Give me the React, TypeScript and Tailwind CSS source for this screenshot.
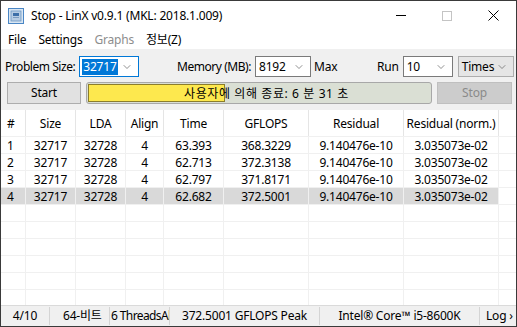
import { ChevronDown } from "lucide-react";

const font = { fontFamily: '"Noto Sans", "Noto Sans CJK KR", sans-serif' };

const columns = [
  { label: "#", cls: "w-[25px] justify-start pl-[6px]" },
  { label: "Size", cls: "w-[50px] justify-center" },
  { label: "LDA", cls: "w-[50px] justify-center" },
  { label: "Align", cls: "w-[38px] justify-center" },
  { label: "Time", cls: "w-[60px] justify-center" },
  { label: "GFLOPS", cls: "w-[85px] justify-center" },
  { label: "Residual", cls: "w-[95px] justify-center" },
  { label: "Residual (norm.)", cls: "w-[95px] justify-center" },
];

const rows = [
  ["1", "32717", "32728", "4", "63.393", "368.3229", "9.140476e-10", "3.035073e-02"],
  ["2", "32717", "32728", "4", "62.713", "372.3138", "9.140476e-10", "3.035073e-02"],
  ["3", "32717", "32728", "4", "62.797", "371.8171", "9.140476e-10", "3.035073e-02"],
  ["4", "32717", "32728", "4", "62.682", "372.5001", "9.140476e-10", "3.035073e-02"],
];

function Combo(props: { value: string; width: string; focused?: boolean; gray?: boolean }) {
  return (
    <div
      className={`flex h-[21px] shrink-0 items-center justify-between border pl-[2px] pr-[5px] ${props.width} ${
        props.focused ? "border-[#0078d7] bg-white" : props.gray ? "border-[#adadad] bg-[#e5e5e5]" : "border-[#7a7a7a] bg-white"
      }`}
    >
      <span className={props.focused ? "bg-[#0078d7] px-[1px] leading-[16px] text-white" : "px-[1px] leading-[16px]"}>
        {props.value}
      </span>
      <ChevronDown className="h-[12px] w-[12px] text-[#555]" strokeWidth={1.3} />
    </div>
  );
}

function AppIcon() {
  return (
    <svg width="16" height="16" viewBox="0 0 16 16">
      <rect x="0.5" y="0.5" width="15" height="15" fill="#d9e6f2" stroke="#4a86c5" />
      <rect x="3" y="3" width="10" height="10" fill="#b8cde3" stroke="#6b96c3" strokeWidth="0.8" />
      <rect x="5" y="5" width="6" height="3" fill="#3d6fa8" />
      <rect x="5" y="9" width="6" height="1" fill="#7c9cc0" />
    </svg>
  );
}

export default function App() {
  return (
    <div
      className="flex h-[327px] w-[517px] flex-col overflow-hidden border border-[#3a3a3a] bg-[#f0f0f0] text-[12px] tracking-[-0.2px] whitespace-nowrap text-black"
      style={font}
    >
      {/* title bar */}
      <div className="flex h-[29px] shrink-0 items-center bg-white">
        <div className="ml-[7px] mr-[7px] flex items-center">
          <AppIcon />
        </div>
        <span>Stop - LinX v0.9.1 (MKL: 2018.1.009)</span>
        <div className="ml-auto flex h-full items-center">
          <div className="flex h-full w-[46px] items-center justify-center">
            <div className="h-[1px] w-[10px] bg-black" />
          </div>
          <div className="flex h-full w-[46px] items-center justify-center">
            <div className="h-[10px] w-[10px] border border-[#c4c4c4]" />
          </div>
          <div className="flex h-full w-[46px] items-center justify-center">
            <svg width="11" height="11" viewBox="0 0 11 11">
              <path d="M0.5 0.5 L10.5 10.5 M10.5 0.5 L0.5 10.5" stroke="#000" strokeWidth="1" />
            </svg>
          </div>
        </div>
      </div>

      {/* menu */}
      <div className="flex h-[19px] shrink-0 items-center gap-[12px] bg-white pl-[7px]">
        <span>File</span>
        <span>Settings</span>
        <span className="text-[#8d8d8d]">Graphs</span>
        <span>정보(Z)</span>
      </div>

      {/* controls row 1 */}
      <div className="mt-[7px] flex h-[21px] shrink-0 items-center">
        <div className="ml-[4px] flex w-[172px] shrink-0 items-center gap-[4px]">
          <span className="tracking-[-0.45px]">Problem Size:</span>
          <Combo value="32717" width="w-[60px]" focused />
        </div>
        <div className="flex w-[200px] shrink-0 items-center gap-[3px]">
          <span className="mr-[1px] tracking-[-0.45px]">Memory (MB):</span>
          <Combo value="8192" width="w-[56px]" />
          <span>Max</span>
        </div>
        <div className="flex items-center gap-[4px]">
          <span>Run</span>
          <Combo value="10" width="w-[50px]" />
        </div>
        <div className="ml-[5px]">
          <Combo value="Times" width="w-[56px]" gray />
        </div>
      </div>

      {/* controls row 2 */}
      <div className="mt-[5px] flex h-[22px] shrink-0 items-stretch">
        <div className="ml-[6px] flex w-[74px] items-center justify-center border border-[#adadad] bg-[#e1e1e1]">Start</div>
        <div className="relative ml-[5px] flex w-[346px] items-center rounded-[3px] border border-[#a8a8a8] bg-[#dadfd4]">
          <div className="ml-[1px] h-[18px] w-[137px] border border-[#8b7d2c] bg-[#fde84e]" />
          <span className="absolute left-[97px] top-[2px] tracking-[0.6px]">사용자에 의해 종료: 6 분 31 초</span>
        </div>
        <div className="ml-[5px] flex w-[75px] items-center justify-center border border-[#bfbfbf] bg-[#cccccc] text-[#8a8a8a]">
          Stop
        </div>
      </div>

      {/* table */}
      <div className="mt-[6px] flex h-[195px] shrink-0 flex-col overflow-hidden bg-white">
        <div className="flex h-[26px] shrink-0">
          {columns.map((c, i) => (
            <div key={i} className={`flex items-center border-r border-[#e5e5e5] pt-[2px] ${c.cls}`}>
              {c.label}
            </div>
          ))}
          <div className="flex-1" />
        </div>
        {rows.map((r, ri) => (
          <div key={ri} className="flex h-[17px] shrink-0">
            {r.map((v, ci) => (
              <div
                key={ci}
                className={`flex items-center border-r border-t border-[#f0f0f0] pt-[1px] ${columns[ci].cls} ${
                  ri === 3 ? "bg-[#d9d9d9]" : ""
                }`}
              >
                {v}
              </div>
            ))}
            <div className="flex-1 border-t border-[#f0f0f0]" />
          </div>
        ))}
        {[0, 1, 2, 3, 4, 5].map((ri) => (
          <div key={ri} className="flex h-[17px] shrink-0">
            {columns.map((c, ci) => (
              <div key={ci} className={`border-r border-t border-[#f0f0f0] ${c.cls}`} />
            ))}
            <div className="flex-1 border-t border-[#f0f0f0]" />
          </div>
        ))}
      </div>

      {/* status bar */}
      <div className="flex flex-1 items-center border-t border-[#dadada] bg-[#f0f0f0]">
        <div className="flex w-[49px] justify-center border-r border-[#d4d4d4]">4/10</div>
        <div className="w-[60px] border-r border-[#d4d4d4] pl-[13px]">64-비트</div>
        <div className="w-[60px] overflow-hidden border-r border-[#d4d4d4] pl-[1px] tracking-[-0.6px]">6 ThreadsAlt</div>
        <div className="flex w-[150px] justify-center border-r border-[#d4d4d4]">372.5001 GFLOPS Peak</div>
        <div className="flex w-[160px] justify-center border-r border-[#d4d4d4]">Intel® Core™ i5-8600K</div>
        <div className="pl-[6px]">Log ›</div>
      </div>
    </div>
  );
}
